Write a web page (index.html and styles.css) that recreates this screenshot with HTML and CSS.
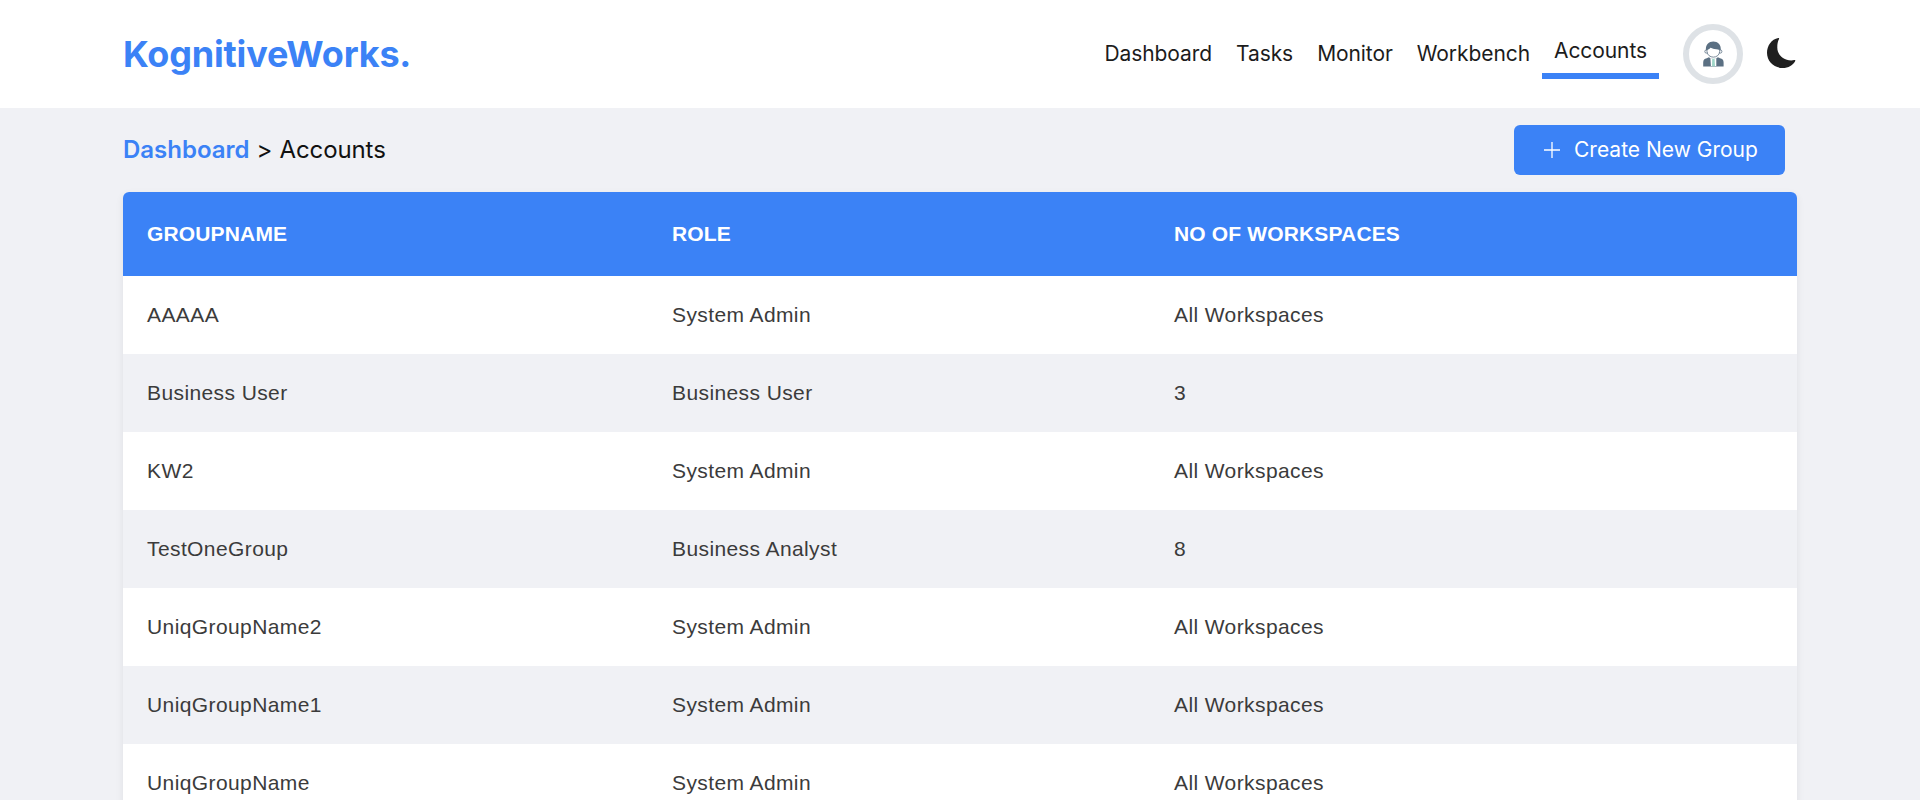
FILE: index.html
```html
<!DOCTYPE html>
<html lang="en">
<head>
<meta charset="utf-8">
<title>KognitiveWorks.</title>
<link rel="stylesheet" href="styles.css">
</head>
<body>
<header class="header">
  <a class="logo">KognitiveWorks.</a>
  <nav class="nav">
    <a class="nav-link">Dashboard</a>
    <a class="nav-link">Tasks</a>
    <a class="nav-link">Monitor</a>
    <a class="nav-link">Workbench</a>
    <a class="nav-link active">Accounts</a>
  </nav>
  <div class="avatar">
    <svg width="21" height="26" viewBox="0 0 21 26">
      <circle cx="3.400" cy="10.500" r="1.600" fill="#fff" stroke="#5b7083" stroke-width=".8"/>
      <circle cx="17.300" cy="10.500" r="1.600" fill="#fff" stroke="#5b7083" stroke-width=".8"/>
      <path d="M4 8.500V10.500C4.500 18 16.200 18 16.700 10.500V8.500L12 6H7Z" fill="#fff" stroke="#5b7083" stroke-width=".8"/>
      <path d="M3 9.300C2.300 3.500 6 .6 10.300 .6S18.400 3.500 17.700 9.300C16.500 8.300 14 8.600 11.500 8.100 9.500 7.800 8.300 7.200 7.600 6.600 6.800 7.900 5 8.800 3 9.300Z" fill="#5b7083"/>
      <path d="M.2 25.500V21.500Q.2 17.500 3.800 17.200L5.800 16.300Q10.300 19.500 15 16.300L17 17.200Q20.600 17.500 20.600 21.500V25.500Z" fill="#5b7083"/>
      <path d="M7.400 17Q10.300 18.500 13.300 17L13.300 25H7.900Z" fill="#fff"/>
      <path d="M9.200 17.800H11.600L12 25.200H9Z" fill="#9fd6c8"/>
    </svg>
  </div>
  <svg class="moon" width="30" height="32" viewBox="0 0 30 32"><path d="M11.300 0C4.500 1.200 0 7.700 0 14.800 0 23.600 7 30 15.500 30 21.400 30 26.300 27 28.200 22.900 28.500 22.200 28 21.900 27.300 22.100 18.500 23.800 10.300 18 10.300 9.500 10.300 6.200 10.700 3.700 11.900 1.300 12.400 .4 12.200 -.1 11.300 0Z"/></svg>
</header>
<main class="content">
  <div class="toolbar">
    <div class="breadcrumb"><a class="crumb-link">Dashboard</a><span>&gt;</span><span class="crumb-current">Accounts</span></div>
    <button class="create">
      <svg width="16" height="16" viewBox="0 0 16 16"><path d="M8 0V16M0 8H16" stroke="#fff" stroke-width="1.300"/></svg>
      <span class="create-label">Create New Group</span>
    </button>
  </div>
  <div class="table">
    <div class="row head"><div>GROUPNAME</div><div>ROLE</div><div>NO OF WORKSPACES</div></div>
    <div class="row"><div>AAAAA</div><div>System Admin</div><div>All Workspaces</div></div>
    <div class="row"><div>Business User</div><div>Business User</div><div>3</div></div>
    <div class="row"><div>KW2</div><div>System Admin</div><div>All Workspaces</div></div>
    <div class="row"><div>TestOneGroup</div><div>Business Analyst</div><div>8</div></div>
    <div class="row"><div>UniqGroupName2</div><div>System Admin</div><div>All Workspaces</div></div>
    <div class="row"><div>UniqGroupName1</div><div>System Admin</div><div>All Workspaces</div></div>
    <div class="row"><div>UniqGroupName</div><div>System Admin</div><div>All Workspaces</div></div>
  </div>
</main>
</body>
</html>
```
FILE: styles.css
```css
* { box-sizing: border-box; }
html { height: 100%; overflow: hidden; }
body {
  margin: 0;
  height: 800px;
  overflow: hidden;
  background: #f0f1f5;
  color: #1c1c1c;
  font-family: Inter, sans-serif;
}
.header {
  display: flex;
  align-items: center;
  height: 108px;
  padding: 0 123px;
  background: #fff;
}
.logo {
  margin-right: auto;
  font-size: 36px;
  font-weight: 700;
  letter-spacing: -.18px;
  color: #3b82f6;
}
.nav { display: flex; align-items: center; }
.nav-link {
  padding: 0 12px;
  font-size: 21px;
  font-weight: 400;
  letter-spacing: -.08px;
  line-height: 32px;
}
.nav-link.active {
  padding-top: 6px;
  padding-bottom: 6px;
  border-bottom: 6px solid #3b82f6;
}
.avatar {
  display: flex;
  align-items: center;
  justify-content: center;
  width: 60px;
  height: 60px;
  margin: 0 24px;
  border: 6px solid #dee2e6;
  border-radius: 50%;
}
.moon { fill: #1f1f1f; }
.content { padding: 0 123px; }
.toolbar {
  display: flex;
  align-items: center;
  justify-content: space-between;
  height: 84px;
  padding-right: 12px;
}
.breadcrumb {
  display: flex;
  gap: 7px;
  padding-bottom: 2px;
  font-size: 24px;
  color: #111;
}
.crumb-link { font-weight: 600; color: #3b82f6; }
.crumb-current { letter-spacing: -.1px; }
.create {
  display: flex;
  align-items: center;
  gap: 14px;
  width: 271px;
  height: 50px;
  padding: 0 0 0 30px;
  border: 0;
  border-radius: 6px;
  background: #3b82f6;
  color: #fff;
  font: 400 21px Inter, sans-serif;
  white-space: nowrap;
}
.create-label { padding-bottom: 2px; }
.table {
  overflow: hidden;
  border-radius: 6px 6px 0 0;
  background: #fff;
  box-shadow: 0 3px 9px rgba(0, 0, 0, .07);
  color: #3b3b3b;
  font: 21px "Liberation Sans", Arial, sans-serif;
}
.row {
  display: grid;
  grid-template-columns: 525px 502px 1fr;
  align-items: center;
  height: 78px;
  padding-left: 24px;
  letter-spacing: .4px;
}
.row:nth-child(odd) { background: #f0f1f5; }
.row.head {
  height: 84px;
  background: #3b82f6;
  color: #fff;
  font-weight: 700;
  letter-spacing: .15px;
}
```
